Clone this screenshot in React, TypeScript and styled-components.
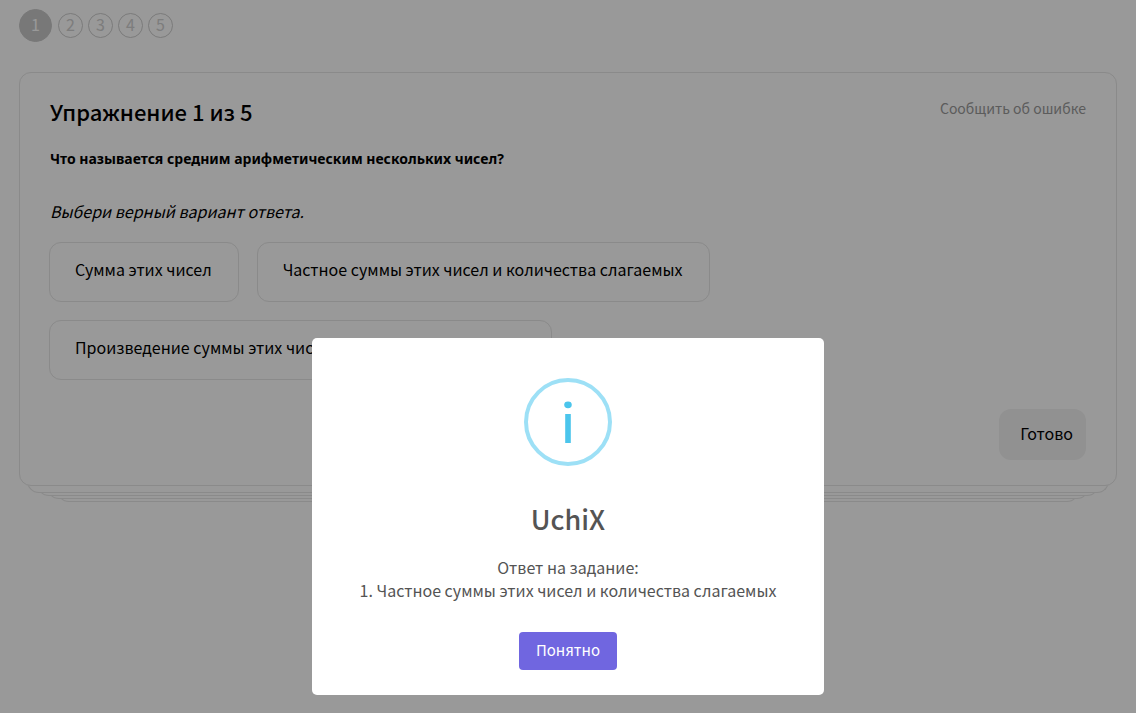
import React from "react";
import styled, { createGlobalStyle, css } from "styled-components";

const GlobalStyle = createGlobalStyle`
  *, *::before, *::after { box-sizing: border-box; }
  body {
    margin: 0;
    background: #fff;
    color: #000;
    font-family: "Noto Sans CJK JP", "Noto Sans", sans-serif;
    font-size: 16px;
    line-height: 24px;
  }
  button { font: inherit; color: inherit; cursor: pointer; }
`;

const Page = styled.main`
  min-height: 100vh;
  padding: 8px 19px 24px;
`;

const Steps = styled.nav`
  display: flex;
  align-items: center;
  gap: 5px;
  height: 34px;
  margin-bottom: 30px;
`;

const Step = styled.button<{ $active?: boolean }>`
  display: flex;
  align-items: center;
  justify-content: center;
  width: 25px;
  height: 25px;
  padding: 0 0 2px;
  border: 1px solid #ccc;
  border-radius: 50%;
  background: transparent;
  color: #d0d0d0;
  ${(p) =>
    p.$active &&
    css`
      width: 33px;
      height: 33px;
      margin-right: 1px;
      border-color: #c8c8c8;
      background: #c8c8c8;
      color: #fff;
    `}
`;

const Stack = styled.div`
  isolation: isolate;
`;

const Card = styled.section`
  padding: 24px 30px 25px;
  border: 1px solid #e6e6e6;
  border-radius: 12px;
  background: #fff;
`;

const Sheet = styled.div<{ $depth: number }>`
  position: relative;
  z-index: ${(p) => -p.$depth};
  height: 20px;
  margin: ${(p) => (p.$depth === 1 ? -13 : -17)}px ${(p) => p.$depth * 10 - 2}px 0;
  border: 1px solid #e6e6e6;
  border-top: 0;
  border-radius: 0 0 12px 12px;
  background: #fff;
`;

const CardHeader = styled.header`
  display: flex;
  justify-content: space-between;
  align-items: flex-start;
`;

const Title = styled.h1`
  margin: 0;
  font-size: 22px;
  font-weight: 500;
  line-height: 28px;
`;

const ReportLink = styled.a`
  color: #999;
  font-size: 14px;
  line-height: 22px;
  text-decoration: none;
`;

const Question = styled.p`
  margin: 22px 0 0;
  font-family: "Noto Sans", sans-serif;
  font-size: 14px;
  font-weight: 700;
`;

const Hint = styled.p`
  margin: 28px 0 19px;
  font-style: italic;
`;

const Options = styled.div`
  display: flex;
  flex-wrap: wrap;
  gap: 18px;
  max-width: 760px;
  margin: 0 -1px;
`;

const Option = styled.button`
  height: 60px;
  padding: 0 26px 6px 25px;
  border: 1px solid #e6e6e6;
  border-radius: 12px;
  background: transparent;
`;

const CardFooter = styled.footer`
  display: flex;
  justify-content: flex-end;
  margin-top: 29px;
`;

const DoneButton = styled.button`
  height: 51px;
  padding: 0 13px 3px 21px;
  border: 0;
  border-radius: 12px;
  background: #f2f2f2;
`;

const Backdrop = styled.div`
  position: fixed;
  inset: 0;
  display: flex;
  align-items: flex-end;
  justify-content: center;
  padding: 18px 10px;
  background: rgba(0, 0, 0, 0.4);
`;

const Dialog = styled.div`
  display: flex;
  flex-direction: column;
  align-items: center;
  width: 512px;
  max-width: 100%;
  padding: 40px 16px 25px;
  border-radius: 5px;
  background: #fff;
  color: #545454;
  text-align: center;
`;

const InfoIcon = styled.svg`
  width: 88px;
  height: 88px;
`;

const DialogTitle = styled.h2`
  margin: 33px 0 17px;
  font-size: 27px;
  font-weight: 500;
  line-height: 40px;
`;

const DialogText = styled.p`
  margin: 0 0 30px;
  line-height: 23px;
`;

const ConfirmButton = styled.button`
  height: 38px;
  padding: 0 17px 2px;
  border: 0;
  border-radius: 4px;
  background: #7066e0;
  color: #fff;
  font-size: 15px;
`;

const options = [
  "Сумма этих чисел",
  "Частное суммы этих чисел и количества слагаемых",
  "Произведение суммы этих чисел и количества слагаемых",
];

export default function App() {
  return (
    <>
      <GlobalStyle />
      <Page>
        <Steps aria-label="Упражнения">
          {[1, 2, 3, 4, 5].map((n) => (
            <Step key={n} type="button" $active={n === 1}>
              {n}
            </Step>
          ))}
        </Steps>
        <Stack>
          <Card>
            <CardHeader>
              <Title>Упражнение 1 из 5</Title>
              <ReportLink href="#report">Сообщить об ошибке</ReportLink>
            </CardHeader>
            <Question>Что называется средним арифметическим нескольких чисел?</Question>
            <Hint>Выбери верный вариант ответа.</Hint>
            <Options>
              {options.map((text) => (
                <Option key={text} type="button">
                  {text}
                </Option>
              ))}
            </Options>
            <CardFooter>
              <DoneButton type="button">Готово</DoneButton>
            </CardFooter>
          </Card>
          {[1, 2, 3, 4].map((depth) => (
            <Sheet key={depth} $depth={depth} />
          ))}
        </Stack>
      </Page>
      <Backdrop>
        <Dialog role="dialog" aria-modal="true" aria-labelledby="dialog-title">
          <InfoIcon viewBox="0 0 88 88" aria-hidden="true">
            <circle cx="44" cy="44" r="42" fill="none" stroke="#9de0f6" strokeWidth="4" />
            <ellipse cx="44" cy="26.8" rx="3.8" ry="3.4" fill="#4bc5ec" />
            <rect x="41.2" y="36" width="5.6" height="29" fill="#4bc5ec" />
          </InfoIcon>
          <DialogTitle id="dialog-title">UchiX</DialogTitle>
          <DialogText>
            Ответ на задание:
            <br />
            1. Частное суммы этих чисел и количества слагаемых
          </DialogText>
          <ConfirmButton type="button">Понятно</ConfirmButton>
        </Dialog>
      </Backdrop>
    </>
  );
}
